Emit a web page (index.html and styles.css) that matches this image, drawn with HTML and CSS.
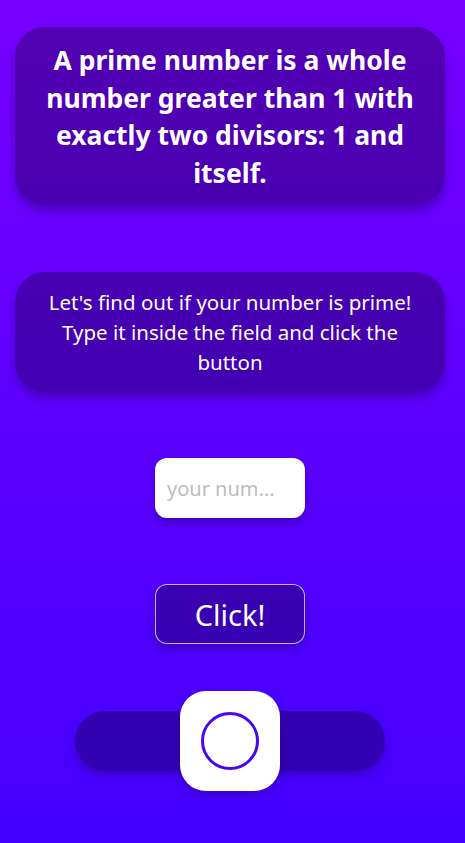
FILE: index.html
```html
<!DOCTYPE html>
<html lang="en">
<head>
<meta charset="utf-8">
<title>Prime checker</title>
<link rel="stylesheet" href="styles.css">
</head>
<body>
<main class="page">
  <section class="card card-title">
    <h1>A prime number is a whole number greater than 1 with exactly two divisors: 1 and itself.</h1>
  </section>
  <section class="card card-info">
    <p>Let's find out if your number is prime! Type it inside the field and click the button</p>
  </section>
  <input class="num-input" type="text" placeholder="your num...">
  <button class="click-btn" type="button">Click!</button>
  <div class="toggle">
    <div class="knob">
      <svg width="60" height="60" viewBox="0 0 60 60"><circle cx="30" cy="30" r="27.5" fill="none" stroke="#4a06f0" stroke-width="3"/></svg>
    </div>
  </div>
</main>
</body>
</html>
```
FILE: styles.css
```css
html, body {
  margin: 0;
  padding: 0;
}
body {
  min-height: 843px;
  background: linear-gradient(180deg, #7700ff 0%, #4400ff 100%);
  font-family: "Noto Sans", "Open Sans", sans-serif;
  color: #fff;
}
.page {
  display: flex;
  flex-direction: column;
  align-items: center;
  padding: 27px 20px 0 15px;
}
.card {
  box-sizing: border-box;
  width: 430px;
  background: rgba(0, 0, 0, 0.3);
  border-radius: 30px;
  box-shadow: 0 6px 10px rgba(40, 0, 120, 0.45);
  text-align: center;
}
.card-title {
  padding: 15px 24px 13px;
}
.card-title h1 {
  margin: 0;
  font-size: 26.5px;
  line-height: 37.5px;
  font-weight: 700;
}
.card-info {
  margin-top: 67px;
  padding: 15px 24px;
}
.card-info p {
  margin: 0;
  font-size: 20.5px;
  line-height: 30px;
}
.num-input {
  box-sizing: border-box;
  margin-top: 66px;
  width: 150px;
  height: 60px;
  border: none;
  border-radius: 12px;
  background: #fff;
  padding: 0 12px;
  font-family: inherit;
  font-size: 20px;
  color: #333;
  box-shadow: 0 5px 8px rgba(40, 0, 120, 0.45);
  outline: none;
}
.num-input::placeholder {
  color: #bdbdbd;
}
.click-btn {
  box-sizing: border-box;
  margin-top: 66px;
  width: 150px;
  height: 60px;
  border: 1px solid rgba(255, 255, 255, 0.7);
  border-radius: 12px;
  background: rgba(0, 0, 0, 0.3);
  color: #fff;
  font-family: inherit;
  font-size: 29px;
  box-shadow: 0 5px 8px rgba(40, 0, 120, 0.45);
}
.toggle {
  margin-top: 67px;
  width: 310px;
  height: 60px;
  border-radius: 30px;
  background: rgba(0, 0, 0, 0.3);
  box-shadow: 0 5px 8px rgba(40, 0, 120, 0.4);
  display: flex;
  align-items: center;
  justify-content: center;
}
.knob {
  flex: none;
  width: 100px;
  height: 100px;
  border-radius: 26px;
  background: #fff;
  box-shadow: 0 4px 8px rgba(40, 0, 120, 0.4);
  display: flex;
  align-items: center;
  justify-content: center;
}
.knob svg {
  display: block;
}
```
